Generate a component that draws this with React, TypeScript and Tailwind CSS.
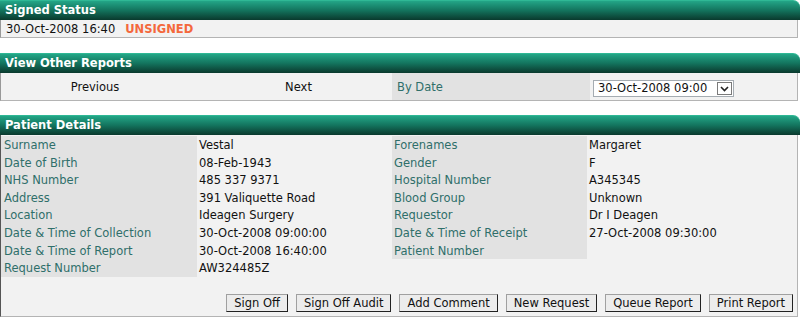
import React from "react";

const font = { fontFamily: '"DejaVu Sans", Verdana, sans-serif' };

function Header({ title }: { title: string }) {
  return (
    <div className="h-[20px] flex items-center pl-[5px] rounded-tr-[7px] bg-gradient-to-b from-[#23a687] via-[#13735d] to-[#0a3a2e] text-white font-bold text-[11.5px] leading-none border-t border-[#2fb895]">
      {title}
    </div>
  );
}

const rows: [string, string, string, string][] = [
  ["Surname", "Vestal", "Forenames", "Margaret"],
  ["Date of Birth", "08-Feb-1943", "Gender", "F"],
  ["NHS Number", "485 337 9371", "Hospital Number", "A345345"],
  ["Address", "391 Valiquette Road", "Blood Group", "Unknown"],
  ["Location", "Ideagen Surgery", "Requestor", "Dr I Deagen"],
  ["Date & Time of Collection", "30-Oct-2008 09:00:00", "Date & Time of Receipt", "27-Oct-2008 09:30:00"],
  ["Date & Time of Report", "30-Oct-2008 16:40:00", "Patient Number", ""],
  ["Request Number", "AW324485Z", "", ""],
];

const buttons = ["Sign Off", "Sign Off Audit", "Add Comment", "New Request", "Queue Report", "Print Report"];

export default function App() {
  return (
    <div className="w-[800px] h-[317px] bg-white text-[11.5px] text-[#111] overflow-hidden" style={font}>
      {/* Signed Status */}
      <Header title="Signed Status" />
      <div className="h-[18px] mr-[2px] flex items-center pl-[5px] pt-[3px] bg-[#f2f2f2] border-b border-r border-l border-[#b4b4b4] border-l-[#999] leading-none">
        <span>30-Oct-2008 16:40</span>
        <span className="ml-[10px] font-bold text-[#f4683c]">UNSIGNED</span>
      </div>
      <div className="h-[15px]" />

      {/* View Other Reports */}
      <Header title="View Other Reports" />
      <div className="h-[28px] mr-[2px] flex bg-[#f2f2f2] border-b border-r border-l border-[#b4b4b4] border-l-[#999] leading-none">
        <div className="w-[196px] flex items-center justify-center pt-[3px] pr-[8px]">Previous</div>
        <div className="w-[195px] flex items-center justify-center pt-[3px] pl-[8px]">Next</div>
        <div className="w-[198px] flex items-center pl-[5px] pt-[3px] bg-[#e2e2e2] text-[#2f6f6a]">By Date</div>
        <div className="flex-1 flex items-center pl-[3px] pt-[4px]">
          <div className="h-[17px] w-[141px] flex items-center bg-white border border-[#a5acb2]">
            <span className="pl-[4px] flex-1">30-Oct-2008 09:00</span>
            <div className="w-[15px] h-[13px] mr-[1px] flex items-center justify-center border border-[#7a7a7a] bg-white">
              <svg width="9" height="6" viewBox="0 0 9 6">
                <path d="M1 1 L4.5 4.5 L8 1" stroke="#222" strokeWidth="1.6" fill="none" />
              </svg>
            </div>
          </div>
        </div>
      </div>
      <div className="h-[14px]" />

      {/* Patient Details */}
      <Header title="Patient Details" />
      <div className="h-[182px] mr-[2px] flex flex-col bg-[#f2f2f2] border-l border-r border-b border-l-[#555] border-r-[#b4b4b4] border-b-[#b4b4b4] pt-[1px]">
        <div className="flex flex-col">
          {rows.map((r, i) => (
            <div key={i} className="flex h-[17.6px] items-center leading-none">
              <div className="w-[196px] h-full flex items-center pl-[3px] pt-[2px] bg-[#e2e2e2] text-[#2f6f6a]">{r[0]}</div>
              <div className="w-[195px] h-full flex items-center pl-[2px] pt-[2px]">{r[1]}</div>
              {i < 7 ? (
                <div className="w-[195px] h-full flex items-center pl-[2px] pt-[2px] bg-[#e2e2e2] text-[#2f6f6a]">{r[2]}</div>
              ) : (
                <div className="w-[195px] h-full" />
              )}
              <div className="flex-1 h-full flex items-center pl-[2px] pt-[2px]">{r[3]}</div>
            </div>
          ))}
        </div>
        <div className="flex-1" />
        <div className="flex justify-end gap-[8px] pr-[4px] pb-[4px]">
          {buttons.map((b) => (
            <div
              key={b}
              className="h-[18px] px-[7px] flex items-center bg-[#ececec] border border-t-[#a0a0a0] border-l-[#a0a0a0] border-r-[#222] border-b-[#222] leading-none pt-[1px]"
            >
              {b}
            </div>
          ))}
        </div>
      </div>
    </div>
  );
}
